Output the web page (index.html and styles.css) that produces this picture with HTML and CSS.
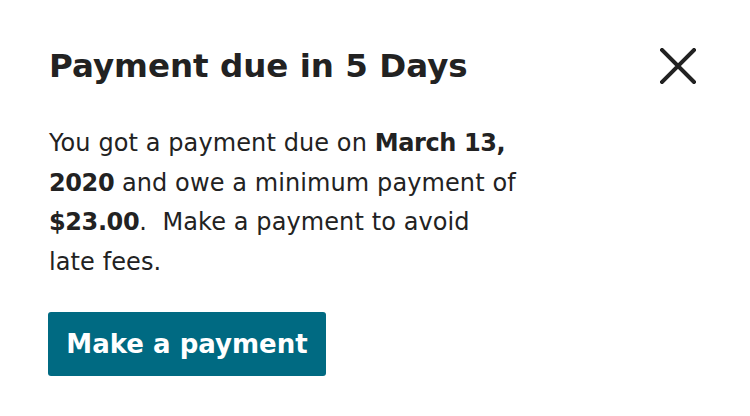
FILE: index.html
```html
<!DOCTYPE html>
<html>
<head>
<meta charset="utf-8">
<link rel="stylesheet" href="styles.css">
</head>
<body>
<div class="card">
  <div class="header">
    <h1 class="title">Payment due in 5 Days</h1>
    <button class="close" aria-label="Close">
      <svg width="36" height="36" viewBox="0 0 36 36"><path d="M2 2 L34 34 M34 2 L2 34" stroke="#222" stroke-width="4" stroke-linecap="square" fill="none"/></svg>
    </button>
  </div>
  <p class="message">You got a payment due on <b>March 13,</b><br><b>2020</b> and owe a minimum payment of<br><b>$23.00</b>.&nbsp; Make a payment to avoid<br>late fees.</p>
  <button class="pay">Make a payment</button>
</div>
</body>
</html>
```
FILE: styles.css
```css
html, body { margin: 0; padding: 0; background: #fff; }
body { font-family: "DejaVu Sans", sans-serif; color: #222; }
.card { padding: 40px 54px 0 49px; }
.header { display: flex; justify-content: space-between; align-items: flex-start; }
.title { margin: 0; font-size: 32.5px; font-weight: 700; line-height: 52px; letter-spacing: 0; }
.close { border: 0; background: none; padding: 0; margin-top: 8px; width: 36px; height: 36px; cursor: pointer; }
.close svg { display: block; }
.message { margin: 32px 0 0; font-size: 24px; line-height: 39.5px; font-weight: 400; letter-spacing: 0.1px; }
.message b { font-weight: 700; letter-spacing: -0.4px; }
.pay { margin-top: 30px; margin-left: -1px; background: #006a82; color: #fff; border: 0; border-radius: 3px; height: 64px; width: 278px; font-family: "DejaVu Sans", sans-serif; font-weight: 700; font-size: 26px; padding: 0; }
```
